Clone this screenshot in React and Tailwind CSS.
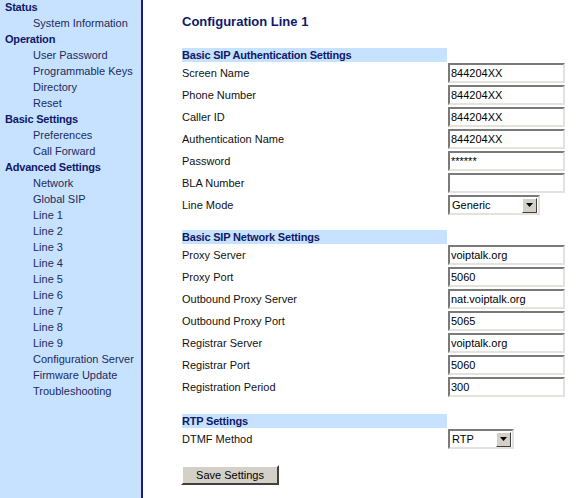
import { useState } from "react";

const menu = [
  { title: "Status", items: ["System Information"] },
  { title: "Operation", items: ["User Password", "Programmable Keys", "Directory", "Reset"] },
  { title: "Basic Settings", items: ["Preferences", "Call Forward"] },
  {
    title: "Advanced Settings",
    items: [
      "Network",
      "Global SIP",
      "Line 1",
      "Line 2",
      "Line 3",
      "Line 4",
      "Line 5",
      "Line 6",
      "Line 7",
      "Line 8",
      "Line 9",
      "Configuration Server",
      "Firmware Update",
      "Troubleshooting",
    ],
  },
];

const authRows = [
  ["Screen Name", "844204XX"],
  ["Phone Number", "844204XX"],
  ["Caller ID", "844204XX"],
  ["Authentication Name", "844204XX"],
  ["Password", "******"],
  ["BLA Number", ""],
];

const netRows = [
  ["Proxy Server", "voiptalk.org"],
  ["Proxy Port", "5060"],
  ["Outbound Proxy Server", "nat.voiptalk.org"],
  ["Outbound Proxy Port", "5065"],
  ["Registrar Server", "voiptalk.org"],
  ["Registrar Port", "5060"],
  ["Registration Period", "300"],
];

function Field({ value }) {
  return (
    <div className="w-[117px] h-[20px] bg-white border-2 border-t-[#7a7a7a] border-l-[#7a7a7a] border-b-[#e4e2dc] border-r-[#e4e2dc] flex items-center px-[1px] text-[11px] text-black leading-none overflow-hidden whitespace-nowrap">
      {value}
    </div>
  );
}

function Dropdown({ value, width }) {
  return (
    <div
      className={`${width} h-[20px] bg-white border-2 border-t-[#7a7a7a] border-l-[#7a7a7a] border-b-[#e4e2dc] border-r-[#e4e2dc] flex items-center text-[11px] text-black leading-none`}
    >
      <span className="flex-1 pl-[2px]">{value}</span>
      <span className="w-[15px] h-[15px] mr-[1px] bg-[#d4d0c8] border border-t-white border-l-white border-b-[#404040] border-r-[#404040] flex items-center justify-center">
        <svg width="7" height="4" viewBox="0 0 7 4">
          <path d="M0 0h7L3.5 4z" fill="#000" />
        </svg>
      </span>
    </div>
  );
}

function Row({ label, children }) {
  return (
    <div className="flex items-center h-[22px]">
      <div className="w-[266px] text-[11px] text-[#111] whitespace-nowrap">{label}</div>
      {children}
    </div>
  );
}

function SectionHead({ children, className }) {
  return (
    <div
      className={`w-[265px] h-[14px] bg-[#c6e2fe] text-[11px] font-bold text-[#10186a] leading-[14px] whitespace-nowrap tracking-[-0.2px] ${className}`}
    >
      {children}
    </div>
  );
}

export default function App() {
  const [active] = useState("Line 1");

  return (
    <div className="flex min-h-screen bg-white font-['Liberation_Sans',Arial,sans-serif]">
      <div className="w-[143px] shrink-0 bg-[#c6e2fe] border-r-2 border-[#1c1c72]">
        {menu.map((group) => (
          <div key={group.title}>
            <div className="h-[16px] leading-[15px] pl-[5px] text-[11px] font-bold text-[#10186a] whitespace-nowrap tracking-[-0.2px]">
              {group.title}
            </div>
            {group.items.map((item) => (
              <div
                key={item}
                className={`h-[16px] leading-[15px] pl-[33px] text-[11px] whitespace-nowrap ${
                  item === active ? "text-[#1e2a5e]" : "text-[#1e2a5e]"
                }`}
              >
                {item}
              </div>
            ))}
          </div>
        ))}
      </div>

      <div className="pl-[39px] pt-[14px]">
        <h1 className="h-[16px] leading-[16px] text-[13px] font-bold text-[#10186a] whitespace-nowrap">
          Configuration Line 1
        </h1>

        <SectionHead className="mt-[18px]">Basic SIP Authentication Settings</SectionHead>
        {authRows.map(([label, value]) => (
          <Row key={label} label={label}>
            <Field value={value} />
          </Row>
        ))}
        <Row label="Line Mode">
          <Dropdown value="Generic" width="w-[92px]" />
        </Row>

        <SectionHead className="mt-[14px]">Basic SIP Network Settings</SectionHead>
        {netRows.map(([label, value]) => (
          <Row key={label} label={label}>
            <Field value={value} />
          </Row>
        ))}

        <SectionHead className="mt-[16px]">RTP Settings</SectionHead>
        <Row label="DTMF Method">
          <Dropdown value="RTP" width="w-[66px]" />
        </Row>

        <button className="mt-[15px] -ml-[1px] w-[98px] h-[20px] bg-[#d4d0c8] border-2 border-t-white border-l-white border-b-[#404040] border-r-[#404040] text-[11px] text-black leading-none">
          Save Settings
        </button>
      </div>
    </div>
  );
}
